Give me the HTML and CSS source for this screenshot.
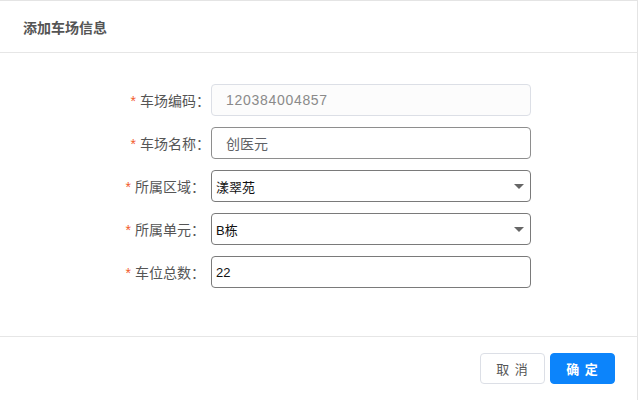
FILE: index.html
```html
<!DOCTYPE html>
<html lang="zh">
<head>
<meta charset="utf-8">
<link rel="stylesheet" href="styles.css">
</head>
<body>
<div class="dialog">
  <div class="dialog-header">添加车场信息</div>
  <div class="dialog-body">
    <div class="form">
      <div class="row">
        <label class="label"><span class="star">*</span>车场编码：</label>
        <div class="el-input disabled"><span class="num">120384004857</span></div>
      </div>
      <div class="row">
        <label class="label"><span class="star">*</span>车场名称：</label>
        <div class="el-input">创医元</div>
      </div>
      <div class="row">
        <label class="label native"><span class="star">*</span>所属区域：</label>
        <div class="native-field select">漾翠苑<span class="caret"></span></div>
      </div>
      <div class="row">
        <label class="label native"><span class="star">*</span>所属单元：</label>
        <div class="native-field select">B栋<span class="caret"></span></div>
      </div>
      <div class="row">
        <label class="label native"><span class="star">*</span>车位总数：</label>
        <div class="native-field">22</div>
      </div>
    </div>
  </div>
  <div class="dialog-footer">
    <button class="btn">取 消</button>
    <button class="btn primary">确 定</button>
  </div>
</div>
</body>
</html>
```
FILE: styles.css
```css
html, body {
  margin: 0;
  padding: 0;
  background: #fff;
  font-family: "Liberation Sans", "Noto Sans CJK SC", sans-serif;
}
.dialog {
  width: 638px;
  height: 400px;
  border-top: 1px solid #e4e4e4;
  border-right: 1px solid #e4e4e4;
  display: flex;
  flex-direction: column;
  box-sizing: border-box;
}
.dialog-header {
  height: 52px;
  border-bottom: 1px solid #e6e6e6;
  padding-left: 23px;
  display: flex;
  align-items: center;
  font-size: 14px;
  font-weight: bold;
  color: #555;
  box-sizing: border-box;
}
.dialog-body {
  height: 284px;
  border-bottom: 1px solid #e6e6e6;
  box-sizing: border-box;
  padding-top: 31px;
}
.form {
  display: flex;
  flex-direction: column;
  gap: 11px;
}
.row {
  display: flex;
  align-items: center;
  height: 32px;
}
.label {
  width: 211px;
  padding-right: 1px;
  box-sizing: border-box;
  text-align: right;
  font-size: 14px;
  color: #555;
  white-space: nowrap;
}
.label.native {
  padding-right: 6px;
}
.star {
  color: #f25a2b;
  margin-right: 4px;
  font-size: 14px;
}
.el-input {
  width: 320px;
  height: 32px;
  box-sizing: border-box;
  border: 1px solid #8e8e8e;
  border-radius: 4px;
  padding-left: 14px;
  display: flex;
  align-items: center;
  font-size: 14px;
  color: #606266;
}
.el-input.disabled {
  border-color: #dcdfe6;
  background: #fcfcfc;
  color: #8a8a8a;
}
.num {
  letter-spacing: 0.7px;
}
.native-field {
  width: 320px;
  height: 32px;
  box-sizing: border-box;
  border: 1px solid #7a7a7a;
  border-radius: 4px;
  padding-left: 4px;
  display: flex;
  align-items: center;
  font-size: 13px;
  color: #111;
  position: relative;
}
.caret {
  position: absolute;
  right: 6px;
  top: 13px;
  width: 0;
  height: 0;
  border-left: 5px solid transparent;
  border-right: 5px solid transparent;
  border-top: 5px solid #666;
}
.dialog-footer {
  flex: 1;
  display: flex;
  justify-content: flex-end;
  align-items: flex-start;
  gap: 5px;
  padding: 16px 22px 0 0;
}
.btn {
  width: 65px;
  height: 31px;
  border-radius: 4px;
  border: 1px solid #dcdfe6;
  background: #fff;
  color: #555;
  font-family: inherit;
  font-size: 13px;
  cursor: pointer;
  padding: 0;
  letter-spacing: 1px;
}
.btn.primary {
  background: #0c84fb;
  border-color: #0c84fb;
  color: #fff;
  font-weight: bold;
}
```
